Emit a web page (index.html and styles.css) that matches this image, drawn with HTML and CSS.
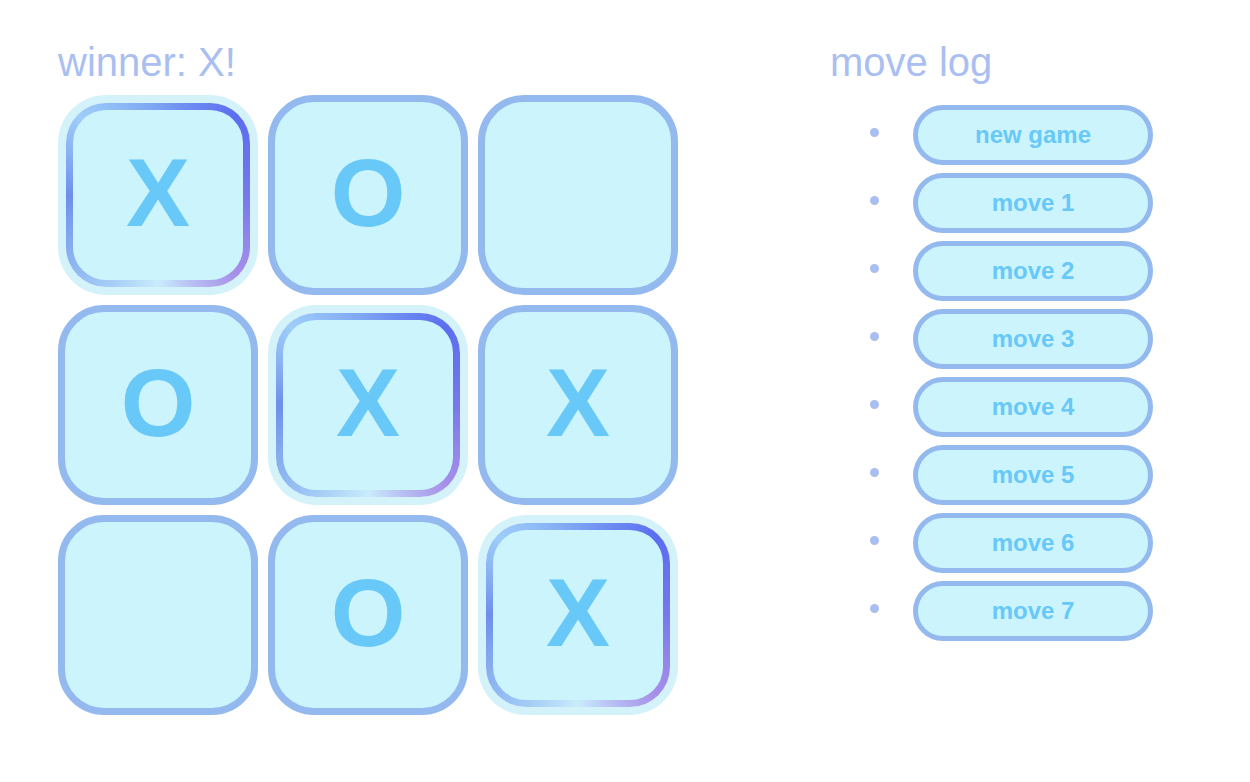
FILE: index.html
```html
<!DOCTYPE html>
<html>
<head>
    <title>Tic-Tac-Toe</title>
    <link rel="stylesheet" href="styles.css">
</head>
<body>
    <div class="game">
        <div class="game-board">
            <h2 class="status">winner: X!</h2>
            <div class="board">
                <div class="cell"><div class="square win">X</div></div>
                <div class="cell"><div class="square">O</div></div>
                <div class="cell"><div class="square"></div></div>
                <div class="cell"><div class="square">O</div></div>
                <div class="cell"><div class="square win">X</div></div>
                <div class="cell"><div class="square">X</div></div>
                <div class="cell"><div class="square"></div></div>
                <div class="cell"><div class="square">O</div></div>
                <div class="cell"><div class="square win">X</div></div>
            </div>
        </div>
        <div class="game-info">
            <h2 class="status">move log</h2>
            <ol class="moves">
                <li><button class="move">new game</button></li>
                <li><button class="move">move 1</button></li>
                <li><button class="move">move 2</button></li>
                <li><button class="move">move 3</button></li>
                <li><button class="move">move 4</button></li>
                <li><button class="move">move 5</button></li>
                <li><button class="move">move 6</button></li>
                <li><button class="move">move 7</button></li>
            </ol>
        </div>
    </div>
</body>
</html>
```

FILE: styles.css
```css
body {
    margin: 0;
    font-family: "Liberation Sans", Arial, sans-serif;
    background-color: #fff;
}
.game {
    display: flex;
    gap: 152px;
    padding: 39px 0 0 58px;
}
.status {
    margin: 0 0 10px 0;
    font-size: 40px;
    font-weight: normal;
    line-height: 46px;
    color: #aabff1;
}
.board {
    display: grid;
    grid-template-columns: repeat(3, 200px);
    grid-auto-rows: 200px;
    gap: 10px;
}
.cell {
    display: flex;
}
.square {
    flex: 1;
    display: flex;
    align-items: center;
    justify-content: center;
    padding-bottom: 4px;
    box-sizing: border-box;
    border: 7px solid #93b9ef;
    border-radius: 46px;
    background-color: #ccf4fd;
    color: #68c8f8;
    font-size: 96px;
    font-weight: bold;
}
.square.win {
    margin: 8px;
    border: 7px solid transparent;
    border-radius: 40px;
    background:
        linear-gradient(#ccf4fd, #ccf4fd) padding-box,
        conic-gradient(#7ba2f2, #5b6ef0 45deg, #7878ec 90deg, #a58ee9 135deg,
            #c9ecfc 180deg, #92bbf2 225deg, #6e8eea 270deg, #9ecdfa 315deg, #7ba2f2) border-box;
    box-shadow: 0 0 0 8px #d4f2f9;
}
.game-info .status {
    margin-bottom: 20px;
}
.moves {
    list-style: none;
    margin: 0;
    padding: 0 0 0 40px;
    display: flex;
    flex-direction: column;
    gap: 8px;
}
.moves li {
    display: flex;
    align-items: center;
}
.moves li::before {
    content: "";
    width: 9px;
    height: 9px;
    margin: 0 34px 6px 0;
    border-radius: 50%;
    background-color: #aabff1;
}
.move {
    width: 240px;
    height: 60px;
    border: 5px solid #93b9ef;
    border-radius: 30px;
    background-color: #ccf4fd;
    color: #68c8f8;
    font-family: "Liberation Sans", Arial, sans-serif;
    font-size: 24px;
    font-weight: bold;
    cursor: pointer;
}
```
